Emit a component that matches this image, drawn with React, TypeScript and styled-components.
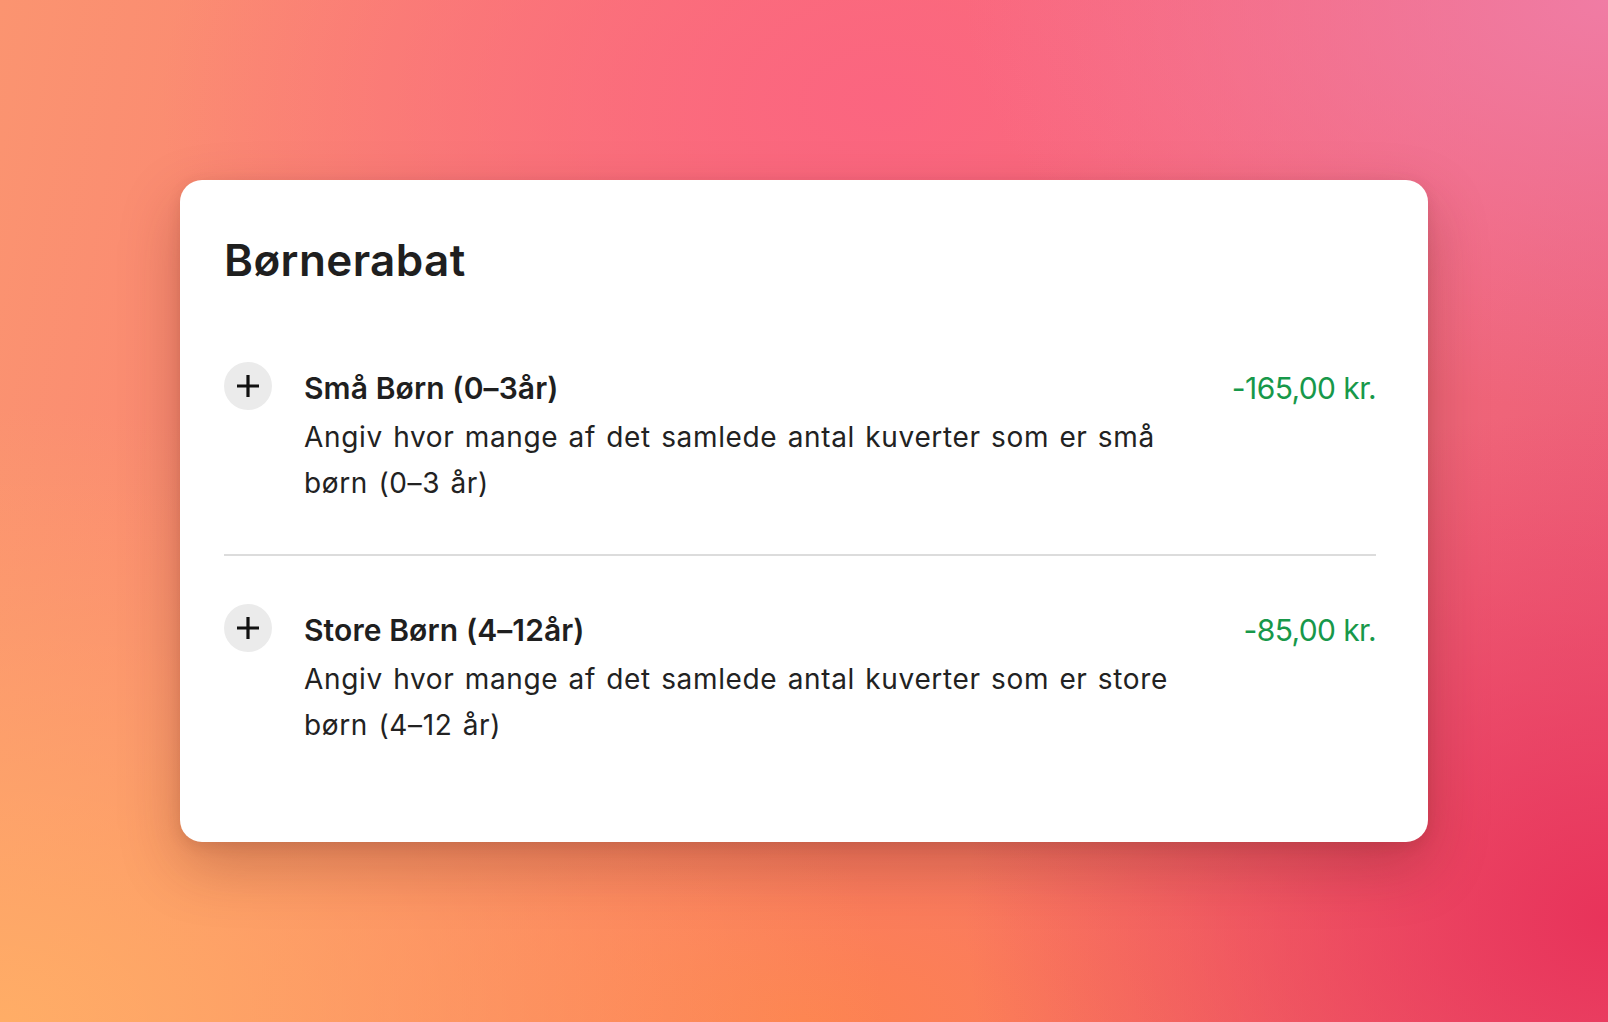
import { FC } from "react";
import styled, { createGlobalStyle } from "styled-components";

const GlobalStyle = createGlobalStyle`
  html, body, #root {
    margin: 0;
    padding: 0;
    height: 100%;
  }
  body {
    font-family: Inter, "Noto Sans", "Liberation Sans", sans-serif;
    -webkit-font-smoothing: antialiased;
  }
`;

type Discount = {
  title: string;
  description: string;
  price: string;
};

const discounts: Discount[] = [
  {
    title: "Små Børn (0–3år)",
    description:
      "Angiv hvor mange af det samlede antal kuverter som er små børn (0–3 år)",
    price: "-165,00 kr.",
  },
  {
    title: "Store Børn (4–12år)",
    description:
      "Angiv hvor mange af det samlede antal kuverter som er store børn (4–12 år)",
    price: "-85,00 kr.",
  },
];

const PlusIcon: FC = () => (
  <svg width="24" height="24" viewBox="0 0 24 24" fill="none">
    <path d="M12 1v22M1 12h22" stroke="#111" strokeWidth="3.2" />
  </svg>
);

const DiscountRow: FC<Discount> = ({ title, description, price }) => (
  <Row>
    <AddButton type="button" aria-label={`Tilføj ${title}`}>
      <PlusIcon />
    </AddButton>
    <RowText>
      <RowTitle>{title}</RowTitle>
      <RowDescription>{description}</RowDescription>
    </RowText>
    <Price>{price}</Price>
  </Row>
);

export default function App() {
  return (
    <>
      <GlobalStyle />
      <Backdrop>
        <Card>
          <Heading>Børnerabat</Heading>
          <List>
            {discounts.map((d) => (
              <DiscountRow key={d.title} {...d} />
            ))}
          </List>
        </Card>
      </Backdrop>
    </>
  );
}

const Backdrop = styled.div`
  width: 100%;
  min-height: 100vh;
  display: flex;
  align-items: center;
  justify-content: center;
  background:
    radial-gradient(ellipse 55% 60% at 0% 100%, #ffad66 0%, rgba(255, 173, 102, 0) 100%),
    radial-gradient(ellipse 40% 50% at 100% 90%, #e8335a 0%, rgba(232, 51, 90, 0) 100%),
    radial-gradient(ellipse 40% 40% at 100% 0%, #f07ca4 0%, rgba(240, 124, 164, 0) 100%),
    radial-gradient(ellipse 45% 45% at 55% 10%, #fb6580 0%, rgba(251, 101, 128, 0) 100%),
    radial-gradient(ellipse 55% 40% at 50% 100%, #fd8250 0%, rgba(253, 130, 80, 0) 100%),
    linear-gradient(100deg, #fb9470 0%, #fa7676 45%, #ec5f7a 100%);
`;

const Card = styled.section`
  width: 1248px;
  box-sizing: border-box;
  padding: 54px 52px 46px 44px;
  background: #fff;
  border-radius: 22px;
  box-shadow: 0 24px 60px rgba(90, 30, 20, 0.28), 0 4px 14px rgba(90, 30, 20, 0.12);
`;

const Heading = styled.h1`
  margin: 0 0 28px;
  font-size: 44px;
  line-height: 52.8px;
  font-weight: 600;
  color: #1f1f1f;
  letter-spacing: 0.4px;
`;

const List = styled.div`
  display: flex;
  flex-direction: column;
`;

const Row = styled.div`
  display: flex;
  align-items: flex-start;
  padding: 48px 0;

  & + & {
    border-top: 2px solid #dcdcdc;
  }
`;

const AddButton = styled.button`
  flex: none;
  width: 48px;
  height: 48px;
  margin-right: 32px;
  padding: 0;
  border: none;
  border-radius: 50%;
  background: #ebebeb;
  display: flex;
  align-items: center;
  justify-content: center;
  cursor: pointer;
`;

const RowText = styled.div`
  flex: 1;
  max-width: 880px;
  margin-right: 48px;
`;

const RowTitle = styled.div`
  font-size: 30px;
  line-height: 52px;
  font-weight: 600;
  color: #1f1f1f;
  letter-spacing: 0.1px;
`;

const RowDescription = styled.p`
  margin: 0;
  font-size: 28px;
  line-height: 46px;
  font-weight: 400;
  color: #222;
  letter-spacing: 0.65px;
  word-spacing: 1.8px;
`;

const Price = styled.div`
  margin-left: auto;
  flex: none;
  font-size: 30px;
  line-height: 52px;
  font-weight: 400;
  color: #17984a;
  letter-spacing: -0.6px;
`;
